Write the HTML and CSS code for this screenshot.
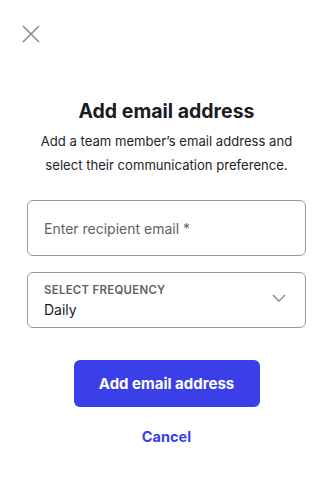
FILE: index.html
```html
<!DOCTYPE html>
<html>
<head>
<meta charset="utf-8">
<link rel="stylesheet" href="styles.css">
</head>
<body>
<div class="modal">
  <div class="top">
    <button class="close" aria-label="Close">
      <svg width="18" height="18" viewBox="0 0 18 18"><path d="M1 1L17 17M17 1L1 17" stroke="#8a8a8a" stroke-width="1.6" fill="none"/></svg>
    </button>
  </div>
  <h1 class="title">Add email address</h1>
  <p class="subtitle">Add a team member’s email address and select their communication preference.</p>
  <div class="field">
    <span class="placeholder">Enter recipient email *</span>
  </div>
  <div class="field select">
    <div class="select-text">
      <span class="label">SELECT FREQUENCY</span>
      <span class="value">Daily</span>
    </div>
    <svg class="chev" width="14" height="8" viewBox="0 0 14 8"><path d="M1 1L7 7L13 1" stroke="#8a8a8a" stroke-width="1.4" fill="none"/></svg>
  </div>
  <div class="actions">
    <button class="primary">Add email address</button>
    <button class="cancel">Cancel</button>
  </div>
</div>
</body>
</html>
```
FILE: styles.css
```css
* { box-sizing: border-box; }
html, body { margin: 0; padding: 0; background: #fff; }
body { font-family: Inter, "Noto Sans", sans-serif; color: #1b1d22; }
.modal { width: 334px; padding: 0 28px 0 27px; }
.top { height: 99px; padding-top: 25px; margin-left: -5px; }
.close { background: none; border: 0; padding: 0; width: 18px; height: 18px; display: block; }
.close svg { display: block; }
.title { margin: 0; text-align: center; font-size: 19.5px; font-weight: 700; line-height: 24px; letter-spacing: 0; color: #1a1c22; }
.subtitle { margin: 6px 0 0; text-align: center; font-size: 13.1px; line-height: 24px; color: #22242a; padding: 0 8px; }
.field { margin-top: 23px; height: 56px; border: 1px solid #9a9a9a; border-radius: 6px; padding: 0 16px; display: flex; align-items: center; }
.field + .field { margin-top: 16px; }
.placeholder { font-size: 14px; color: #5f6166; }
.select { justify-content: space-between; padding-right: 19px; }
.select-text { display: flex; flex-direction: column; }
.label { font-size: 11.4px; font-weight: 600; letter-spacing: 0.3px; color: #5f6166; line-height: 14px; margin-top: 2px; }
.value { font-size: 14px; color: #1a1c22; line-height: 20px; margin-top: 3px; }
.chev { display: block; margin-top: -4px; }
.actions { display: flex; flex-direction: column; align-items: center; margin-top: 32px; }
.primary { width: 186px; height: 47px; border: 0; border-radius: 6px; background: #3a3fe8; color: #fff; font-family: inherit; font-size: 15px; font-weight: 700; }
.cancel { margin-top: 20px; background: none; border: 0; padding: 0; color: #3a3fe8; font-family: inherit; font-size: 14.5px; font-weight: 700; line-height: 20px; }
```
